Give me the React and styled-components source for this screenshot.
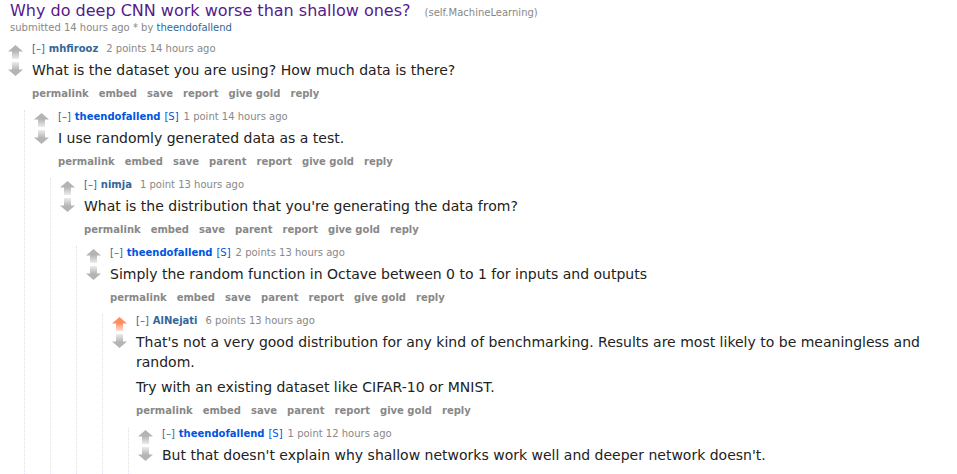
import React from "react";
import styled, { createGlobalStyle } from "styled-components";

const GlobalStyle = createGlobalStyle`
  html, body {
    margin: 0;
    padding: 0;
    background: #fff;
  }
  body {
    font-family: "DejaVu Sans", Verdana, sans-serif;
    color: #222;
  }
`;

const thread = {
  author: "mhfirooz",
  points: "2 points",
  time: "14 hours ago",
  body: ["What is the dataset you are using? How much data is there?"],
  top: true,
  child: {
    author: "theendofallend",
    submitter: true,
    points: "1 point",
    time: "14 hours ago",
    body: ["I use randomly generated data as a test."],
    child: {
      author: "nimja",
      points: "1 point",
      time: "13 hours ago",
      body: ["What is the distribution that you're generating the data from?"],
      child: {
        author: "theendofallend",
        submitter: true,
        points: "2 points",
        time: "13 hours ago",
        body: [
          "Simply the random function in Octave between 0 to 1 for inputs and outputs",
        ],
        child: {
          author: "AlNejati",
          upvoted: true,
          points: "6 points",
          time: "13 hours ago",
          body: [
            "That's not a very good distribution for any kind of benchmarking. Results are most likely to be meaningless and random.",
            "Try with an existing dataset like CIFAR-10 or MNIST.",
          ],
          child: {
            author: "theendofallend",
            submitter: true,
            points: "1 point",
            time: "12 hours ago",
            body: [
              "But that doesn't explain why shallow networks work well and deeper network doesn't.",
            ],
          },
        },
      },
    },
  },
};

const Page = styled.div`
  padding: 0 0 0 8px;
`;

const LinkHead = styled.div`
  padding: 1px 0 0 2px;
`;

const Title = styled.a`
  font-size: 16px;
  line-height: 19px;
  color: #551a8b;
  text-decoration: none;
`;

const Domain = styled.span`
  font-size: 10px;
  color: #888;
  margin-left: 14px;
`;

const Submitted = styled.div`
  font-size: 10px;
  line-height: 13px;
  margin-top: 1px;
  color: #888;
`;

const UserLink = styled.a`
  color: #369;
  text-decoration: none;
`;

const Thread = styled.div`
  margin-top: 8px;
`;

const Row = styled.div`
  display: flex;
  align-items: flex-start;
`;

const Midcol = styled.div`
  width: 15px;
  flex: none;
  margin-right: 9px;
  display: flex;
  flex-direction: column;
  padding-top: 3px;
  gap: 3px;
`;

const Entry = styled.div`
  flex: 1;
  min-width: 0;
`;

const Tagline = styled.div`
  font-size: 10px;
  line-height: 14px;
  color: #888;
`;

const Expand = styled.span`
  color: #369;
  margin-right: 4px;
`;

const Author = styled.a`
  font-weight: bold;
  color: ${(p) => (p.$submitter ? "#0055df" : "#369")};
  text-decoration: none;
  margin-right: ${(p) => (p.$submitter ? "4px" : "8px")};
`;

const Flair = styled.span`
  color: #0055df;
  margin-right: 5px;
`;

const Md = styled.div`
  font-size: 14px;
  line-height: 20px;
  color: #222;
  max-width: 795px;

  p {
    margin: 4px 0 5px;
  }
`;

const Buttons = styled.ul`
  list-style: none;
  margin: 0;
  padding: 2px 0 0;
  display: flex;
  gap: 10px;
  font-size: 10px;
  line-height: 14px;
  font-weight: bold;
  color: #888;
`;

const Child = styled.div`
  margin: 9px 0 0 16px;
  padding-left: 9px;
  border-left: 1px dotted #ddf;
`;

const Arrow = ({ down, on }) => {
  const id = `g-${down ? "d" : "u"}-${on ? "on" : "off"}`;
  const head = on ? "#ff8b60" : "#b4b4b4";
  const fade = on ? "#fde3d8" : "#ececec";
  return (
    <svg
      width="15"
      height="14"
      viewBox="0 0 15 14"
      style={down ? { transform: "rotate(180deg)" } : undefined}
    >
      <defs>
        <linearGradient id={id} x1="0" y1="0" x2="0" y2="1">
          <stop offset="0" stopColor={head} />
          <stop offset="1" stopColor={fade} />
        </linearGradient>
      </defs>
      <polygon points="7.5,0 15,6.5 0,6.5" fill={head} />
      <rect x="4" y="6" width="7" height="8" fill={`url(#${id})`} />
    </svg>
  );
};

const Comment = ({ data }) => {
  const buttons = data.top
    ? ["permalink", "embed", "save", "report", "give gold", "reply"]
    : ["permalink", "embed", "save", "parent", "report", "give gold", "reply"];
  return (
    <div>
      <Row>
        <Midcol>
          <Arrow on={data.upvoted} />
          <Arrow down />
        </Midcol>
        <Entry>
          <Tagline>
            <Expand>[–]</Expand>
            <Author $submitter={data.submitter}>{data.author}</Author>
            {data.submitter && <Flair>[S]</Flair>}
            {data.points} {data.time}
          </Tagline>
          <Md>
            {data.body.map((t) => (
              <p key={t}>{t}</p>
            ))}
          </Md>
          <Buttons>
            {buttons.map((b) => (
              <li key={b}>{b}</li>
            ))}
          </Buttons>
        </Entry>
      </Row>
      {data.child && (
        <Child>
          <Comment data={data.child} />
        </Child>
      )}
    </div>
  );
};

export default function App() {
  return (
    <Page>
      <GlobalStyle />
      <LinkHead>
        <Title>Why do deep CNN work worse than shallow ones?</Title>
        <Domain>(self.MachineLearning)</Domain>
        <Submitted>
          submitted 14 hours ago * by <UserLink>theendofallend</UserLink>
        </Submitted>
      </LinkHead>
      <Thread>
        <Comment data={thread} />
      </Thread>
    </Page>
  );
}
